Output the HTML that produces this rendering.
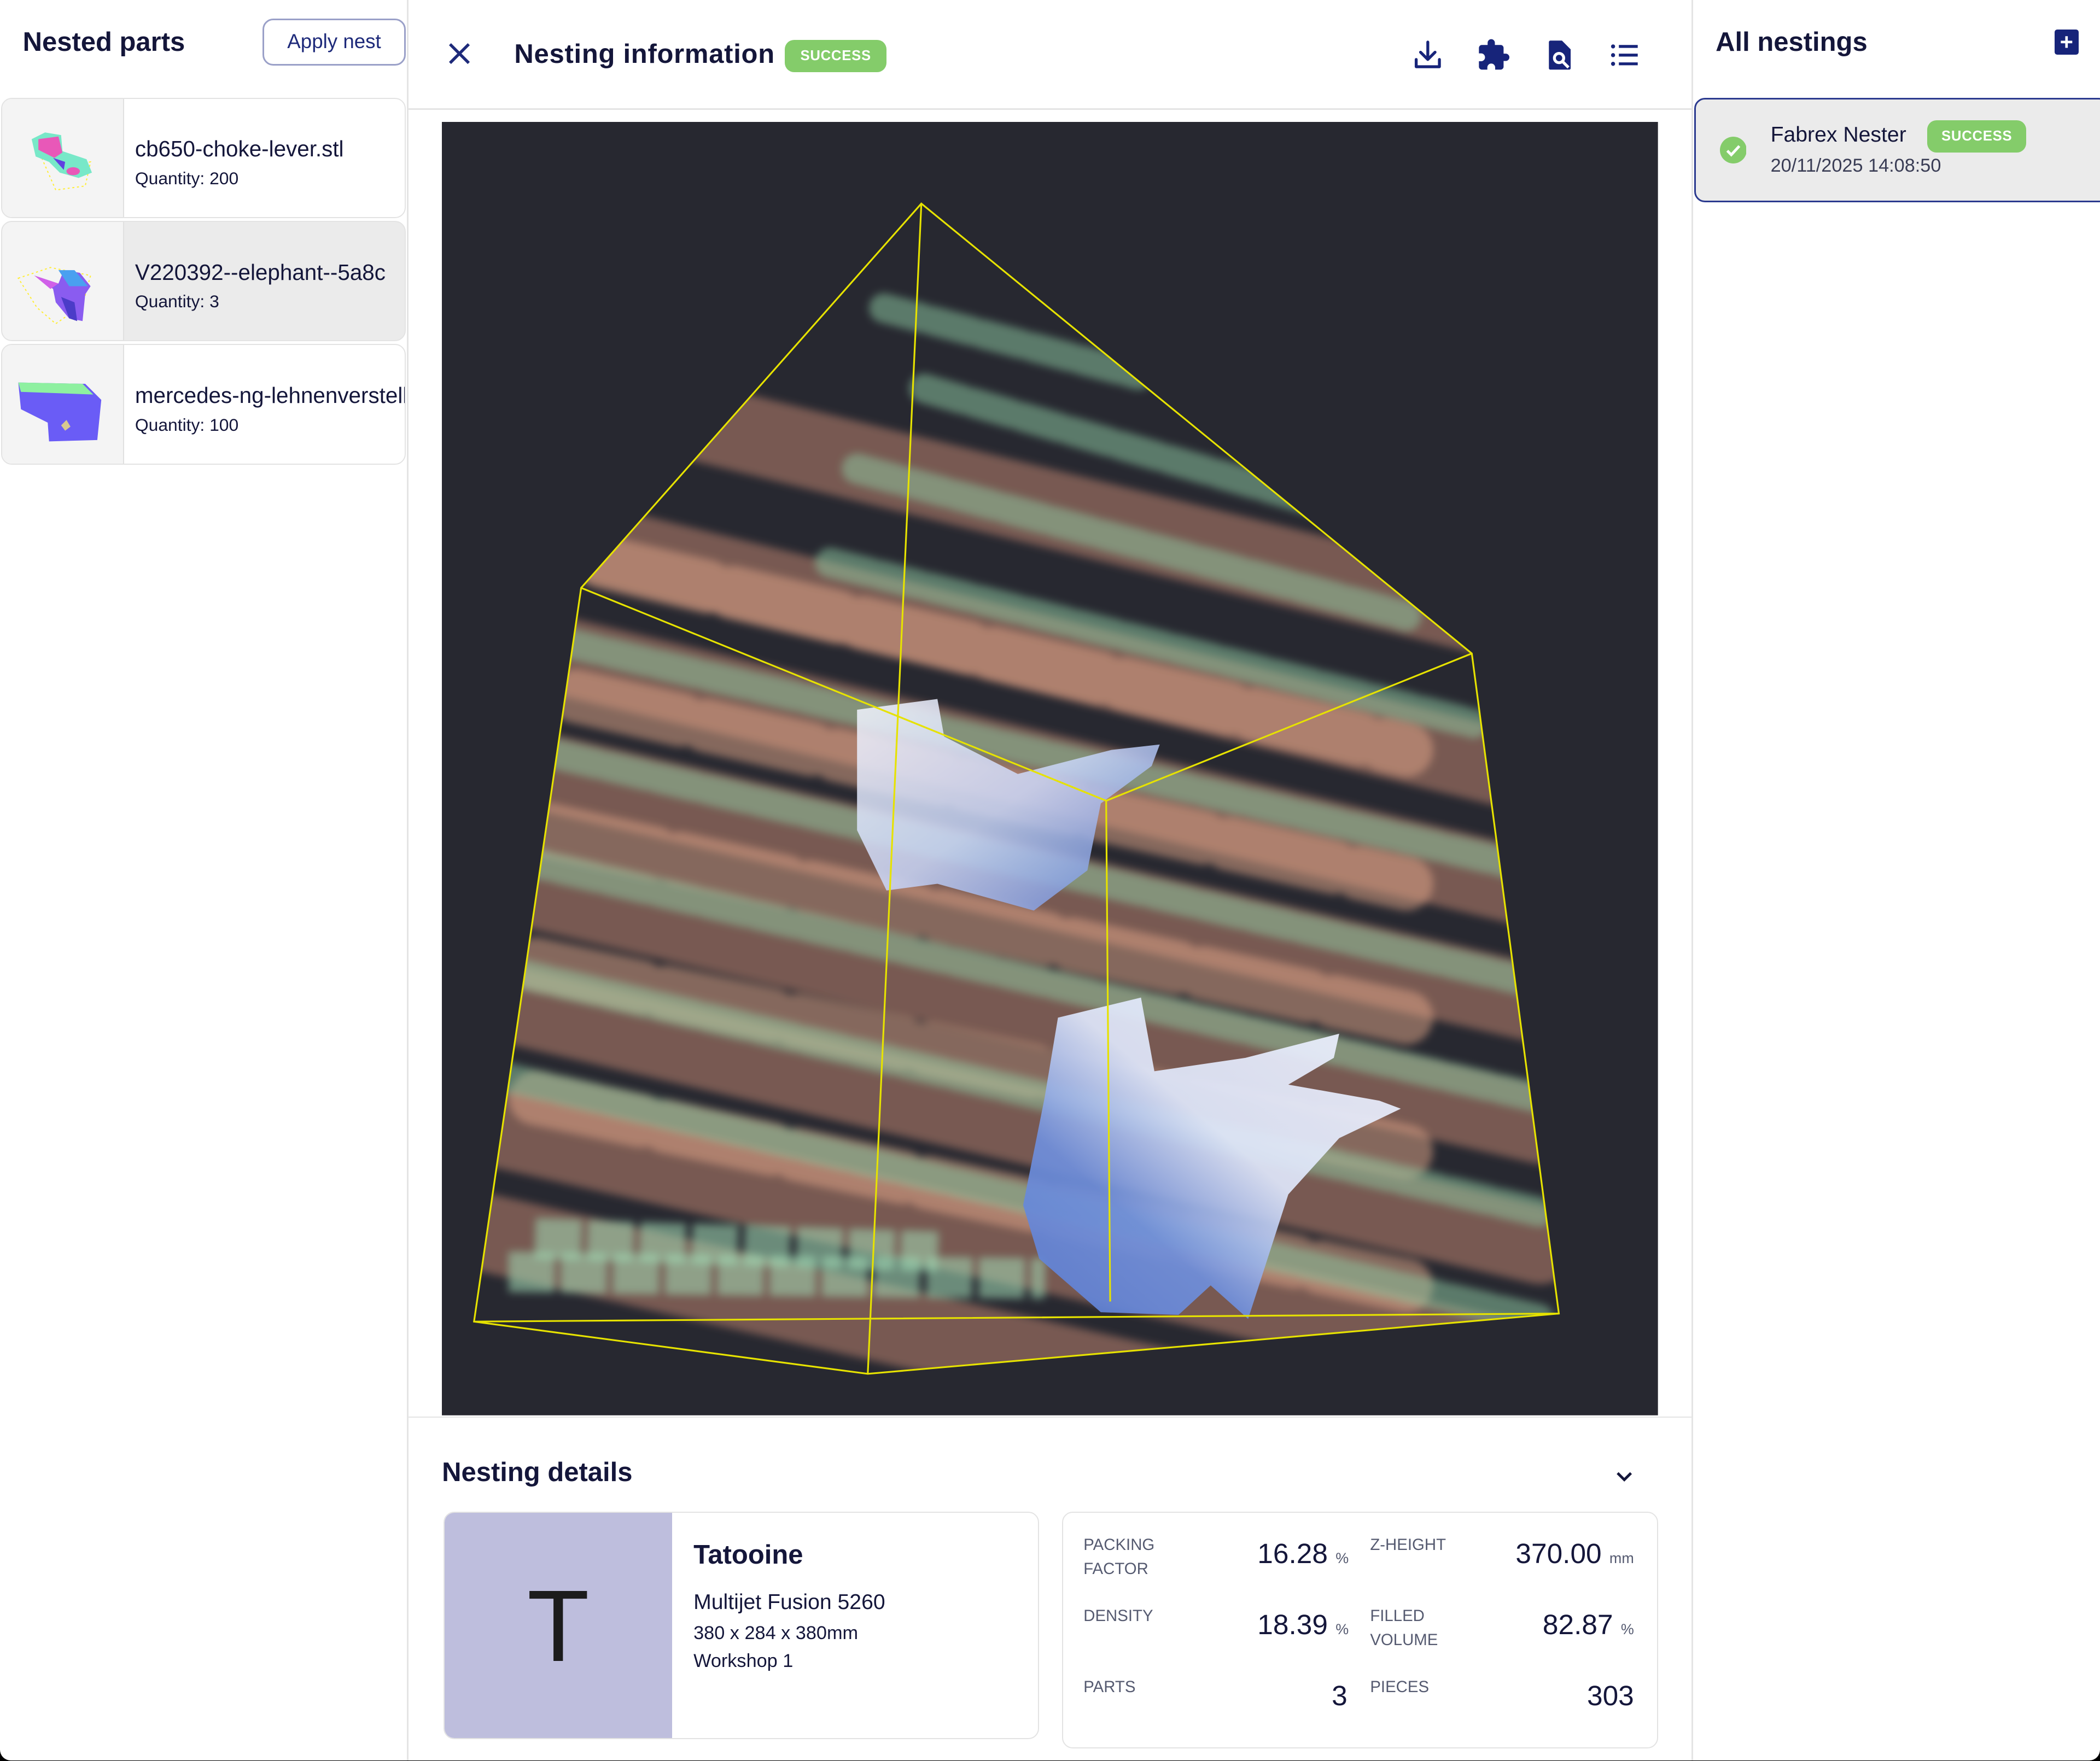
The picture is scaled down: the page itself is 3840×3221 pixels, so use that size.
<!DOCTYPE html>
<html><head><meta charset="utf-8"><style>
html,body{margin:0;padding:0;background:#000;width:3840px;height:3221px;overflow:hidden}
#w{zoom:2.449;width:1568px;height:1315px;position:relative;background:#fff;border-radius:0 0 8px 8px;overflow:hidden;font-family:"Liberation Sans",sans-serif;color:#14163a}
.a{position:absolute}
.t{font-weight:bold;font-size:20px;color:#14163a;white-space:nowrap}
.badge{background:#84cc6a;color:#fff;font-weight:bold;font-size:10.5px;border-radius:7px;text-align:center;letter-spacing:.3px}
.card{position:absolute;left:1px;width:302px;height:90px;border:1px solid #e3e3e3;border-radius:8px;background:#fff;overflow:hidden;box-sizing:border-box}
.card .th{position:absolute;left:0;top:0;width:90px;height:100%;background:#f4f4f4;border-right:1px solid #e0e0e0}
.card .n{position:absolute;left:99px;top:28px;font-size:16.5px;white-space:nowrap}
.card .q{position:absolute;left:99px;top:52px;font-size:13px}
.lab{position:absolute;font-size:12px;color:#555a70;line-height:18px}
.val{position:absolute;font-size:21px;color:#14163a;text-align:right;white-space:nowrap}
.val small{font-size:11px;color:#555a70}
</style></head><body><div id="w">
<div class="a" style="left:304px;top:0;width:1px;height:1315px;background:#e4e4e4"></div>
<div class="a t" style="left:17px;top:20px">Nested parts</div>
<div class="a" style="left:196px;top:14px;width:107px;height:35px;box-sizing:border-box;border:1.5px solid #9aa0c8;border-radius:8px;color:#1e2a7a;font-size:15px;text-align:center;line-height:32px">Apply nest</div>
<div class="card" style="top:73px"><div class="th"><svg width="90" height="90" viewBox="0 0 90 90"><path d="M26 36l14 15 26-4-4 18-22 3z" fill="none" stroke="#ffee33" stroke-width=".8" stroke-dasharray="1.5 2"/><path d="M22 30l10-5 12 2 1 12 18 6 4 10-10 4-14-4-8-8-10-4z" fill="#78e8c8"/><path d="M27 30l15-2 3 12-6 4-12-6z" fill="#e858b8"/><path d="M38 44l9 3-1 6z" fill="#6040e0"/><ellipse cx="53" cy="54" rx="5" ry="3" fill="#e858b8"/></svg></div><div class="n">cb650-choke-lever.stl</div><div class="q">Quantity: 200</div></div>
<div class="card" style="top:165px;background:#ebebeb"><div class="th"><svg width="90" height="90" viewBox="0 0 90 90"><path d="M12 42l24-8 30 6-6 22-20 14-14-12z" fill="none" stroke="#ffee33" stroke-width=".8" stroke-dasharray="1.5 2"/><path d="M24 40l18 6 4-10 12 2 8 10-4 6-2 20-10-2-10-12-2-10z" fill="#8a5cf0"/><path d="M42 36l12 0 10 12-14 0z" fill="#4aa0f0"/><path d="M24 40l18 6-6 4z" fill="#d060e8"/><path d="M44 56l10 4 2 14-6-2z" fill="#4b3cc8"/></svg></div><div class="n">V220392--elephant--5a8c</div><div class="q">Quantity: 3</div></div>
<div class="card" style="top:257px"><div class="th"><svg width="90" height="90" viewBox="0 0 90 90"><path d="M12 28l50 1 12 12-3 30-36 1-1-14-20-10z" fill="#6a5cf6"/><path d="M12 28l48 1 8 8-54-2z" fill="#8ef0a0"/><path d="M44 60l4-4 3 5-4 3z" fill="#d8c890"/></svg></div><div class="n">mercedes-ng-lehnenverstellung</div><div class="q">Quantity: 100</div></div>

<div class="a" style="left:305px;top:81px;width:958px;height:1px;background:#e4e4e4"></div>
<svg class="a" style="left:334px;top:31px" width="18" height="18" viewBox="0 0 18 18"><path d="M2 2l14 14M16 2L2 16" stroke="#1e2a7a" stroke-width="2.2"/></svg>
<div class="a t" style="left:384px;top:29px;letter-spacing:.3px">Nesting information</div>
<div class="a badge" style="left:586px;top:30px;width:76px;height:24px;line-height:24px">SUCCESS</div>
<svg class="a" style="left:1053px;top:28px" width="26" height="26" viewBox="0 0 24 24" fill="none" stroke="#17247a" stroke-width="2" stroke-linecap="round" stroke-linejoin="round"><path d="M12 3v12M7 10l5 5 5-5M4 15v5h16v-5"/></svg>
<svg class="a" style="left:1102px;top:28px" width="26" height="26" viewBox="0 0 24 24"><path d="M20.5 11H19V7a2 2 0 0 0-2-2h-4V3.5a2.5 2.5 0 0 0-5 0V5H4a2 2 0 0 0-2 2v3.8h1.5a2.7 2.7 0 0 1 0 5.4H2V20a2 2 0 0 0 2 2h3.8v-1.5a2.7 2.7 0 0 1 5.4 0V22H17a2 2 0 0 0 2-2v-4h1.5a2.5 2.5 0 0 0 0-5z" fill="#17247a"/></svg>
<svg class="a" style="left:1151px;top:28px" width="26" height="26" viewBox="0 0 24 24"><path d="M6 2h8l6 6v13a1 1 0 0 1-1 1H6a1 1 0 0 1-1-1V3a1 1 0 0 1 1-1z" fill="#17247a"/><circle cx="12" cy="14" r="3.2" fill="none" stroke="#fff" stroke-width="2"/><path d="M14.5 16.5l4 4" stroke="#fff" stroke-width="2"/></svg>
<svg class="a" style="left:1200px;top:28px" width="26" height="26" viewBox="0 0 24 24"><circle cx="4" cy="6" r="1.4" fill="#17247a"/><circle cx="4" cy="12" r="1.4" fill="#17247a"/><circle cx="4" cy="18" r="1.4" fill="#17247a"/><path d="M8 6h13M8 12h13M8 18h13" stroke="#17247a" stroke-width="2"/></svg>

<svg class="a" style="left:330px;top:91px" width="908" height="966" viewBox="330 91 908 966">
<defs>
<clipPath id="c"><polygon points="688,152 1099,488 1164,981 648,1026 354,987 434,439"/></clipPath>
<filter id="b"><feGaussianBlur stdDeviation="3"/></filter>
<linearGradient id="g1" x1="0" y1="0" x2="1" y2="1"><stop offset="0" stop-color="#f4f6ff"/><stop offset=".5" stop-color="#c9d6f8"/><stop offset="1" stop-color="#5b7ed6"/></linearGradient>
<linearGradient id="g2" x1="1" y1="0" x2="0" y2="1"><stop offset="0" stop-color="#f0f3ff"/><stop offset=".45" stop-color="#dfe7fb"/><stop offset=".7" stop-color="#6f8fdc"/><stop offset="1" stop-color="#5b7ed6"/></linearGradient>
</defs>
<rect x="330" y="91" width="908" height="966" fill="#272830"/>
<g clip-path="url(#c)" filter="url(#b)">
<g stroke="#9a6e60" stroke-opacity=".7" stroke-width="58" stroke-dasharray="110 6" stroke-linecap="round" fill="none">
<line x1="460" y1="300" x2="1150" y2="470"/><line x1="420" y1="400" x2="1150" y2="580"/><line x1="400" y1="485" x2="1150" y2="665"/><line x1="380" y1="570" x2="1150" y2="750"/><line x1="380" y1="660" x2="1150" y2="840"/><line x1="380" y1="750" x2="1150" y2="930"/><line x1="360" y1="840" x2="1150" y2="1020"/><line x1="360" y1="920" x2="1150" y2="1100"/>
</g>
<g stroke="#e3a88a" stroke-opacity=".5" stroke-width="40" stroke-dasharray="80 20" stroke-linecap="round" fill="none">
<line x1="450" y1="420" x2="1050" y2="560"/><line x1="430" y1="520" x2="1050" y2="660"/><line x1="410" y1="620" x2="1050" y2="760"/><line x1="400" y1="720" x2="1050" y2="860"/><line x1="400" y1="820" x2="1050" y2="960"/>
</g>
<g stroke="#8fcba3" stroke-opacity=".5" stroke-width="22" stroke-dasharray="30 8" stroke-linecap="round" fill="none">
<line x1="660" y1="230" x2="850" y2="280"/><line x1="690" y1="290" x2="1000" y2="380"/><line x1="640" y1="350" x2="1050" y2="460"/><line x1="620" y1="420" x2="1100" y2="540"/><line x1="380" y1="470" x2="1150" y2="650"/><line x1="380" y1="555" x2="1150" y2="735"/><line x1="380" y1="640" x2="1150" y2="820"/><line x1="380" y1="725" x2="1150" y2="905"/><line x1="380" y1="805" x2="1150" y2="985"/>
</g>
<g stroke="#a2dcb6" stroke-opacity=".55" stroke-width="30" stroke-dasharray="34 5" fill="none">
<line x1="380" y1="950" x2="780" y2="955"/><line x1="400" y1="925" x2="700" y2="935"/>
</g>
</g>
<path d="M640 530L700 522L705 550L760 578L830 560L866 556L860 572L822 600L812 650L772 680L700 660L662 665L640 620Z" fill="url(#g1)" fill-opacity=".85"/>
<path d="M790 760L852 745L862 800L930 790L1000 772L996 790L962 810L1030 822L1046 828L1000 850L962 892L932 985L904 960L880 982L822 980L776 940L764 900L780 820Z" fill="url(#g2)" fill-opacity=".92"/>
<g stroke="#e6e200" stroke-width="1.3" fill="none">
<polygon points="688,152 1099,488 1164,981 648,1026 354,987 434,439"/>
<path d="M688 152L648 1026M434 439L826 598L1099 488M826 598L829 972M354 987L1164 981"/>
</g>
</svg>

<div class="a" style="left:305px;top:1058px;width:958px;height:1px;background:#e4e4e4"></div>
<div class="a t" style="left:330px;top:1088px">Nesting details</div>
<svg class="a" style="left:1206px;top:1097px" width="14" height="12" viewBox="0 0 14 12"><path d="M2 3l5 5 5-5" stroke="#14163a" stroke-width="2" fill="none"/></svg>

<div class="a" style="left:331px;top:1129px;width:445px;height:170px;border:1px solid #e3e3e3;border-radius:8px;box-sizing:border-box;overflow:hidden;background:#fff">
 <div class="a" style="left:0;top:0;width:170px;height:170px;background:#bebedd;font-size:76px;color:#1c1c1c;text-align:center;line-height:170px">T</div>
 <div class="a" style="left:186px;top:20px;font-size:20px;font-weight:bold">Tatooine</div>
 <div class="a" style="left:186px;top:58px;font-size:16px">Multijet Fusion 5260</div>
 <div class="a" style="left:186px;top:82px;font-size:14px">380 x 284 x 380mm</div>
 <div class="a" style="left:186px;top:103px;font-size:14px">Workshop 1</div>
</div>
<div class="a" style="left:793px;top:1129px;width:445px;height:177px;border:1px solid #e3e3e3;border-radius:8px;box-sizing:border-box;background:#fff"></div>
<div class="lab" style="left:809px;top:1145px">PACKING<br>FACTOR</div>
<div class="val" style="right:561px;top:1148px">16.28 <small>%</small></div>
<div class="lab" style="left:1023px;top:1145px">Z-HEIGHT</div>
<div class="val" style="right:348px;top:1148px">370.00 <small>mm</small></div>
<div class="lab" style="left:809px;top:1198px">DENSITY</div>
<div class="val" style="right:561px;top:1201px">18.39 <small>%</small></div>
<div class="lab" style="left:1023px;top:1198px">FILLED<br>VOLUME</div>
<div class="val" style="right:348px;top:1201px">82.87 <small>%</small></div>
<div class="lab" style="left:809px;top:1251px">PARTS</div>
<div class="val" style="right:562px;top:1254px">3</div>
<div class="lab" style="left:1023px;top:1251px">PIECES</div>
<div class="val" style="right:348px;top:1254px">303</div>

<div class="a" style="left:1263px;top:0;width:1px;height:1315px;background:#e4e4e4"></div>
<div class="a t" style="left:1281px;top:20px">All nestings</div>
<div class="a" style="left:1534px;top:22px;width:18px;height:19px;background:#17247a;border-radius:2px;color:#fff;font-size:17px;font-weight:bold;text-align:center;line-height:19px">+</div>
<div class="a" style="left:1265px;top:73px;width:310px;height:78px;box-sizing:border-box;border:1.5px solid #2b3a8f;border-radius:8px;background:#ebebeb"></div>
<svg class="a" style="left:1284px;top:102px" width="20" height="20" viewBox="0 0 20 20"><circle cx="10" cy="10" r="10" fill="#84cc6a"/><path d="M5.5 10.5l3 3 6-6.5" stroke="#fff" stroke-width="2" fill="none"/></svg>
<div class="a" style="left:1322px;top:92px;font-size:16px">Fabrex Nester</div>
<div class="a badge" style="left:1439px;top:90px;width:74px;height:24px;line-height:24px">SUCCESS</div>
<div class="a" style="left:1322px;top:116px;font-size:14px;color:#3a3d55">20/11/2025 14:08:50</div>
</div></body></html>
